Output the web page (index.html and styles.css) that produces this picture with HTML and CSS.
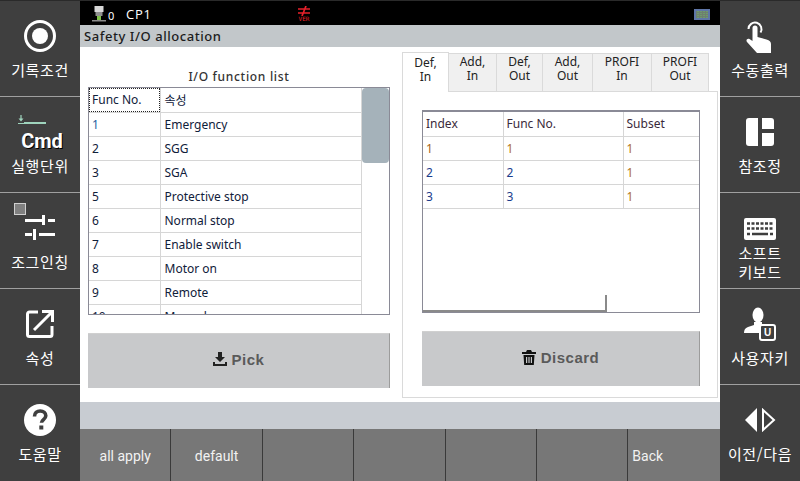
FILE: index.html
```html
<!DOCTYPE html>
<html lang="ko">
<head>
    <meta charset="UTF-8">
    <meta name="viewport" content="width=device-width, initial-scale=1.0">
    <title>Safety I/O allocation</title>
    <link rel="stylesheet" href="styles.css">
</head>
<body>
<div class="screen">
    <!-- left soft keys -->
    <aside class="side">
        <div class="key">
            <div class="key-icon">
                <svg width="34" height="34" viewBox="0 0 34 34"><circle cx="17" cy="17" r="14.5" fill="none" stroke="#fff" stroke-width="3"/><circle cx="17" cy="17" r="8" fill="#fff"/></svg>
            </div>
            <div class="key-label">기록조건</div>
        </div>
        <div class="key">
            <div class="step-mark">
                <svg width="30" height="10" viewBox="0 0 30 10"><path d="M2 9.5h6M5 1v5" stroke="#9fd4bd" stroke-width="1.2" fill="none"/><path d="M2.5 4.5h5L5 7.5z" fill="#9fd4bd"/><path d="M8 9h22" stroke="#9fd4bd" stroke-width="2"/></svg>
            </div>
            <div class="cmd">Cmd</div>
            <div class="key-label">실행단위</div>
        </div>
        <div class="key">
            <span class="jog-check"></span>
            <div class="key-icon">
                <svg width="30" height="28" viewBox="0 0 30 28" fill="#fff"><rect x="0" y="5" width="17" height="3"/><rect x="17" y="1" width="3" height="10"/><rect x="23" y="5" width="7" height="3"/><rect x="0" y="19" width="7" height="3"/><rect x="8" y="15" width="3" height="11"/><rect x="14" y="19" width="16" height="3"/></svg>
            </div>
            <div class="key-label">조그인칭</div>
        </div>
        <div class="key">
            <div class="key-icon">
                <svg width="30" height="30" viewBox="0 0 30 30" fill="none" stroke="#fff" stroke-width="3"><path d="M13 3H4.5a2 2 0 0 0-2 2v20.500a2 2 0 0 0 2 2h20.500a2 2 0 0 0 2-2V17"/><path d="M9 21L26 4"/><path d="M17 2.500h10.500V13"/></svg>
            </div>
            <div class="key-label">속성</div>
        </div>
        <div class="key key-last">
            <div class="key-icon">
                <svg width="34" height="34" viewBox="0 0 34 34"><circle cx="17" cy="17" r="16" fill="#fff"/><path d="M11.500 13.500c0-3.500 2.500-5.500 5.700-5.500 3.300 0 5.600 2 5.600 4.800 0 3.700-4.300 3.900-4.300 7" fill="none" stroke="#3f3f3f" stroke-width="3.600"/><rect x="16.300" y="22.500" width="4" height="4" fill="#3f3f3f"/></svg>
            </div>
            <div class="key-label">도움말</div>
        </div>
    </aside>

    <main class="center">
        <div class="status">
            <svg class="robot" width="14" height="16" viewBox="0 0 14 16"><rect x="2.500" y="0" width="9" height="6" fill="#d8d8d8"/><rect x="3.500" y="6" width="7" height="4" fill="#8f8f8f"/><rect x="5" y="10" width="4" height="4" fill="#7fc14a"/><rect x="0" y="14" width="14" height="1.500" fill="#8a8a8a"/></svg>
            <span class="robot-no">0</span>
            <span class="cp">CP1</span>
            <div class="ver">
                <svg width="12" height="10" viewBox="0 0 12 10"><path d="M0 3h12M0 7h12M8 0L4 10" stroke="#e8202a" stroke-width="1.700" fill="none"/></svg>
                <span>VER</span>
            </div>
            <svg class="net" width="16" height="11" viewBox="0 0 16 11"><rect width="16" height="11" fill="#5f76a8"/><rect x="2" y="2" width="12" height="7" fill="#6f7f6f"/><path d="M4 2v7M7 2v7M10 2v7M13 2v7" stroke="#6cb76c" stroke-dasharray="1 1"/></svg>
        </div>
        <div class="title">Safety I/O allocation</div>

        <div class="content">
            <section class="left">
                <div class="list-title">I/O function list</div>
                <div class="list-box">
                    <div class="list-clip">
                        <table class="grid func-table">
                            <tr><td class="focus">Func No.</td><td>속성</td></tr>
                            <tr><td class="no">1</td><td>Emergency</td></tr>
                            <tr><td>2</td><td>SGG</td></tr>
                            <tr><td>3</td><td>SGA</td></tr>
                            <tr><td>5</td><td>Protective stop</td></tr>
                            <tr><td>6</td><td>Normal stop</td></tr>
                            <tr><td>7</td><td>Enable switch</td></tr>
                            <tr><td>8</td><td>Motor on</td></tr>
                            <tr><td>9</td><td>Remote</td></tr>
                            <tr><td>10</td><td>Manual</td></tr>
                        </table>
                    </div>
                    <div class="scroll"><div class="thumb"></div></div>
                </div>
                <button class="action">
                    <svg width="14" height="14" viewBox="0 0 14 14" fill="#222"><path d="M5 0h4v5h3L7 10 2 5h3z"/><path d="M0 10h2v2h10v-2h2v4H0z"/></svg>
                    <span>Pick</span>
                </button>
            </section>

            <section class="right">
                <div class="tabs">
                    <div class="tab tab-on w47">Def,<br>In</div>
                    <div class="tab w48">Add,<br>In</div>
                    <div class="tab w46">Def,<br>Out</div>
                    <div class="tab w50">Add,<br>Out</div>
                    <div class="tab w59">PROFI<br>In</div>
                    <div class="tab w57">PROFI<br>Out</div>
                </div>
                <div class="tab-body">
                    <div class="index-box">
                        <table class="grid index-table">
                            <tr class="head"><td>Index</td><td>Func No.</td><td>Subset</td></tr>
                            <tr><td>1</td><td>1</td><td>1</td></tr>
                            <tr><td>2</td><td>2</td><td>1</td></tr>
                            <tr><td>3</td><td>3</td><td>1</td></tr>
                        </table>
                        <span class="corner"></span>
                    </div>
                    <button class="action">
                        <svg width="14" height="15" viewBox="0 0 14 15" fill="#111"><path d="M5 0h4l1 2h4v2H0V2h4z"/><path d="M1.500 5h11l-.7 10H2.200zM4 7v6h1.200V7zm2.400 0v6h1.200V7zm2.400 0v6H10V7z" fill-rule="evenodd"/></svg>
                        <span>Discard</span>
                    </button>
                </div>
            </section>
        </div>

        <div class="band"></div>
        <div class="footer">
            <div class="f-btn">all apply</div>
            <div class="f-btn">default</div>
            <div class="f-btn"></div>
            <div class="f-btn"></div>
            <div class="f-btn"></div>
            <div class="f-btn"></div>
            <div class="f-btn f-back">Back</div>
        </div>
    </main>

    <!-- right soft keys -->
    <aside class="side">
        <div class="key">
            <div class="key-icon">
                <svg width="32" height="36" viewBox="0 0 32 36"><path d="M4.500 11a6.500 6.500 0 1 1 12 3.500" fill="none" stroke="#fff" stroke-width="2"/><path d="M8.500 10a2.500 2.500 0 0 1 5 0v9l9 2.500c3 1 4.500 2 4.500 4.500v9H13L3 24c-1.500-2 .5-4 2.500-3l3 2z" fill="#fff"/></svg>
            </div>
            <div class="key-label">수동출력</div>
        </div>
        <div class="key">
            <div class="key-icon">
                <svg width="28" height="28" viewBox="0 0 28 28" fill="#fff"><path d="M3 0h9v28H3a3 3 0 0 1-3-3V3a3 3 0 0 1 3-3z"/><path d="M16 0h9a3 3 0 0 1 3 3v8H16z"/><path d="M16 15h12v10a3 3 0 0 1-3 3h-9z"/></svg>
            </div>
            <div class="key-label">참조정</div>
        </div>
        <div class="key key-kbd">
            <div class="key-icon kbd-icon">
                <svg width="32" height="22" viewBox="0 0 32 22"><rect width="32" height="22" rx="2" fill="#fff"/><path d="M3 5.500h26M3 10.500h26" stroke="#3f3f3f" stroke-width="2.500" stroke-dasharray="3 1.500"/><path d="M3 16h3M8 16h16M26 16h3" stroke="#3f3f3f" stroke-width="2.500"/></svg>
            </div>
            <div class="key-label">소프트<br>키보드</div>
        </div>
        <div class="key">
            <div class="key-icon">
                <svg width="34" height="34" viewBox="0 0 34 34"><ellipse cx="15" cy="8" rx="5.500" ry="7.500" fill="#fff"/><path d="M11 15h8v4l-3 2v5H1c0-3 1-5 4-6l6-2z" fill="#fff"/><rect x="17" y="18" width="15" height="15" rx="2" fill="#3f3f3f" stroke="#fff" stroke-width="2"/><text x="24.500" y="29" font-family="Liberation Sans" font-size="10" font-weight="700" text-anchor="middle" fill="#fff">U</text></svg>
            </div>
            <div class="key-label">사용자키</div>
        </div>
        <div class="key key-last">
            <div class="key-icon">
                <svg width="32" height="24" viewBox="0 0 32 24"><path d="M13 0v24L1 12z" fill="#fff"/><path d="M19 2v20l11-10z" fill="none" stroke="#fff" stroke-width="2"/></svg>
            </div>
            <div class="key-label">이전/다음</div>
        </div>
    </aside>
</div>
</body>
</html>
```

FILE: styles.css
```css
* {
    box-sizing: border-box;
}
html, body {
    margin: 0;
    padding: 0;
}
body {
    font-family: "Noto Sans", "Noto Sans CJK KR", sans-serif;
    background-color: #000;
}
.screen {
    display: flex;
    width: 800px;
    height: 481px;
    overflow: hidden;
}

/* soft keys */
.side {
    width: 80px;
    flex: none;
    display: flex;
    flex-direction: column;
    background-color: #3f3f3f;
    border-top: 1px solid #2a2a2a;
}
.key {
    position: relative;
    height: 96.2px;
    padding-top: 11px;
    border-bottom: 1px solid #a0a0a0;
    color: #fff;
    text-align: center;
}
.key-last {
    border-bottom: none;
}
.key-icon {
    height: 48px;
    display: flex;
    align-items: center;
    justify-content: center;
}
.key-label {
    font-family: "Noto Sans CJK KR", sans-serif;
    font-size: 15px;
    line-height: 19px;
    letter-spacing: 0.6px;
}
.key-kbd {
    padding-top: 22px;
}
.kbd-icon {
    height: 28px;
}
.step-mark {
    height: 14px;
    margin-top: 6px;
    padding-left: 16px;
    display: flex;
}
.step-mark svg {
    display: block;
}
.cmd {
    font-family: Roboto, sans-serif;
    font-weight: 700;
    font-size: 20px;
    line-height: 26px;
    padding-left: 4px;
    text-shadow: 1px 1px 0 #000;
    margin-bottom: 2px;
}
.jog-check {
    position: absolute;
    left: 14px;
    top: 10px;
    width: 12px;
    height: 12px;
    background-color: #808080;
    border: 1px solid #d0d0d0;
}

/* middle column */
.center {
    flex: 1;
    display: flex;
    flex-direction: column;
    min-width: 0;
}
.status {
    height: 25px;
    flex: none;
    display: flex;
    align-items: center;
    background-color: #000;
    border-top: 1px solid #2a2a2a;
    color: #fff;
    padding-left: 12px;
}
.robot {
    margin-top: 2px;
}
.robot-no {
    font-size: 11px;
    margin: 4px 0 0 2px;
    width: 18px;
}
.cp {
    font-family: "Open Sans", sans-serif;
    font-size: 13px;
    letter-spacing: 0.8px;
    width: 172px;
    padding-top: 1px;
}
.ver {
    width: 12px;
    display: flex;
    flex-direction: column;
    align-items: center;
    color: #e8202a;
    font-family: "DejaVu Sans Mono", monospace;
    font-size: 6px;
    line-height: 6px;
    margin-top: 1px;
}
.net {
    margin-left: auto;
    margin-right: 10px;
    margin-top: 2px;
}
.title {
    height: 22px;
    flex: none;
    background-color: #c2c7ca;
    color: #1c1c1c;
    font-family: "Noto Sans", sans-serif;
    font-weight: 500;
    font-size: 13px;
    line-height: 22px;
    letter-spacing: 0.55px;
    padding-left: 4px;
}
.content {
    height: 355px;
    flex: none;
    display: flex;
    background-color: #fff;
}
.left {
    width: 322px;
    padding: 20px 0 0 8px;
    flex: none;
}
.list-title {
    width: 302px;
    height: 20px;
    text-align: center;
    font-weight: 500;
    font-size: 12px;
    line-height: 20px;
    letter-spacing: 0.7px;
    color: #333;
}
.list-box {
    width: 302px;
    height: 228px;
    display: flex;
    border: 1px solid #8a8a96;
}
.list-clip {
    width: 273px;
    height: 226px;
    overflow: hidden;
}
.scroll {
    flex: 1;
}
.thumb {
    height: 75px;
    background-color: #a5b2ba;
    border-radius: 4px;
}

/* tables */
.grid {
    border-collapse: collapse;
    table-layout: fixed;
    font-size: 12px;
    color: #10203a;
}
.grid td {
    height: 24px;
    padding: 0 0 0 3px;
    border: 1px solid #d6d6d6;
    white-space: nowrap;
}
.grid tr:first-child td {
    border-top: none;
}
.grid td:first-child {
    border-left: none;
}
.func-table {
    width: 273px;
}
.func-table td:first-child {
    width: 71px;
}
.func-table td:last-child {
    padding-left: 4px;
}
.focus {
    outline: 1px dotted #222;
    outline-offset: -1px;
}
.no {
    color: #1f5f9f;
}
.index-box {
    position: relative;
    width: 278px;
    height: 203px;
    margin: 18px 0 0 19px;
    border: 1px solid #8a8a96;
    border-top-width: 2px;
}
.index-table {
    width: 276px;
}
.index-table td:first-child {
    width: 80px;
}
.index-table td:nth-child(2) {
    width: 120px;
}
.index-table td:last-child {
    border-right: none;
}
.index-table tr:not(.head) td {
    color: #b0731f;
}
.index-table tr:not(.head) td:first-child {
    color: #a5651a;
}
.index-table tr:nth-child(3) td:first-child,
.index-table tr:nth-child(4) td:first-child {
    color: #1a3c8c;
}
.index-table tr:nth-child(3) td:nth-child(2),
.index-table tr:nth-child(4) td:nth-child(2) {
    color: #1a3c8c;
}
.index-table .head td {
    color: #3a2a3a;
}
.corner {
    position: absolute;
    left: 0;
    bottom: 0;
    width: 184px;
    height: 17px;
    border-right: 2px solid #8a8a8a;
    border-bottom: 2px solid #8a8a8a;
}

/* buttons */
.action {
    display: flex;
    align-items: center;
    justify-content: center;
    gap: 5px;
    width: 302px;
    height: 55px;
    margin-top: 18px;
    padding: 0 0 4px;
    background-color: #c8c9cb;
    border: none;
    border-right: 1px solid #9c9c9c;
    border-top: 1px solid #d0d0d0;
    color: #5a5a5a;
    font-family: "Liberation Sans", sans-serif;
    font-weight: 700;
    font-size: 15px;
    letter-spacing: 0.5px;
}
.tab-body .action {
    width: 278px;
    margin: 18px 0 0 19px;
}

/* tabs */
.right {
    width: 316px;
    flex: none;
    padding: 4px 0 0;
    margin-left: 0;
}
.tabs {
    display: flex;
    align-items: flex-end;
    height: 40px;
    position: relative;
    z-index: 1;
}
.tab {
    height: 38px;
    padding-top: 1px;
    background-color: #f0f0f0;
    border: 1px solid #dadada;
    border-left: none;
    border-bottom: none;
    text-align: center;
    font-size: 12px;
    line-height: 14px;
    color: #222;
}
.tab-on {
    height: 40px;
    margin-bottom: -1px;
    padding-top: 3px;
    background-color: #fff;
    border-left: 1px solid #dadada;
}
.w47 { width: 47px; }
.w48 { width: 48px; }
.w46 { width: 46px; }
.w50 { width: 50px; }
.w59 { width: 59px; }
.w57 { width: 57px; }
.tab-body {
    height: 307px;
    border: 1px solid #dadada;
    border-top-color: #dadada;
    background-color: #fff;
}

/* bottom */
.band {
    height: 27px;
    flex: none;
    background-color: #c8ccd2;
}
.footer {
    flex: 1;
    display: flex;
    background-color: #777;
}
.f-btn {
    width: 91.4px;
    border-right: 1px solid #3a3a3a;
    color: #f2f2f2;
    font-family: Roboto, sans-serif;
    font-size: 14px;
    line-height: 54px;
    text-align: center;
}
.f-back {
    border-right: none;
    text-align: left;
    padding-left: 4px;
}
```
